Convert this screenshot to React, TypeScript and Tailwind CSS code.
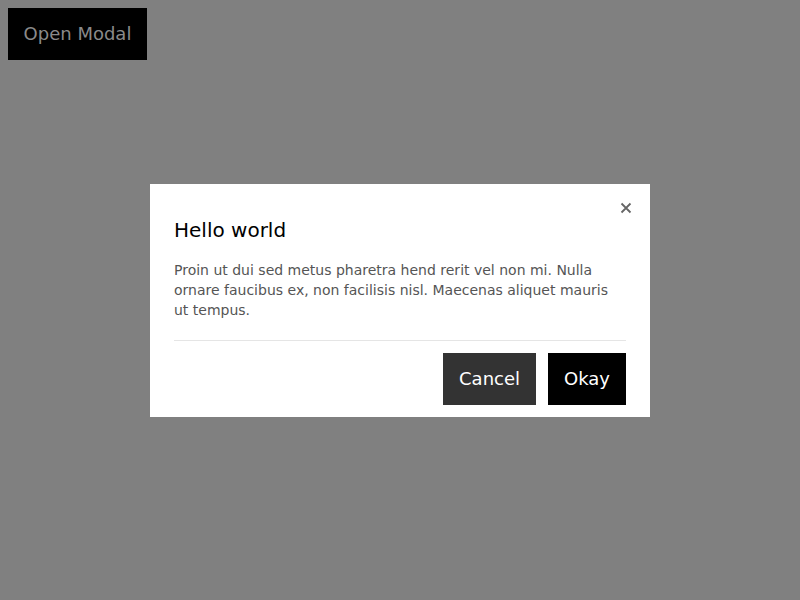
import React from 'react';

const App = () => {
    return (
        <div className="relative w-[800px] h-[600px] bg-[#808080] font-['DejaVu_Sans',sans-serif]">
            <div className="p-2">
                <button className="h-[52px] w-[139px] pb-[2px] bg-black text-[#8a8a8a] text-[18px]">Open Modal</button>
            </div>
            <div className="absolute inset-0 flex items-center justify-center">
                <div className="relative w-[500px] bg-white px-6 pt-8 pb-3">
                    <button className="absolute top-[18px] right-[18px] w-3 h-3 text-[#666]">
                        <svg viewBox="0 0 12 12" className="w-3 h-3" stroke="currentColor" strokeWidth="1.8">
                            <path d="M1.5 1.5 L10.5 10.5 M10.5 1.5 L1.5 10.5" />
                        </svg>
                    </button>
                    <h2 className="text-[20px] leading-7 text-black">Hello world</h2>
                    <p className="mt-4 text-[14px] leading-5 text-[#555]">
                        Proin ut dui sed metus pharetra hend rerit vel non mi. Nulla ornare faucibus ex, non facilisis nisl. Maecenas aliquet mauris ut tempus.
                    </p>
                    <div className="mt-5 border-t border-[#e5e5e5]" />
                    <div className="mt-3 flex justify-end gap-3">
                        <button className="h-[52px] px-4 bg-[#333] text-white text-[18px]">Cancel</button>
                        <button className="h-[52px] px-4 bg-black text-white text-[18px]">Okay</button>
                    </div>
                </div>
            </div>
        </div>
    );
};

export default App;
